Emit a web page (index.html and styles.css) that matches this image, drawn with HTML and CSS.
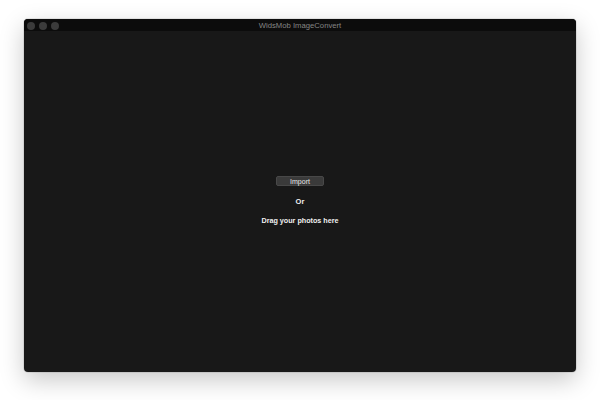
FILE: index.html
```html
<!DOCTYPE html>
<html>
<head>
<meta charset="utf-8">
<link rel="stylesheet" href="styles.css">
</head>
<body>
<div class="window">
  <div class="titlebar">
    <div class="lights">
      <span class="light"></span>
      <span class="light"></span>
      <span class="light"></span>
    </div>
    <div class="title">WidsMob ImageConvert</div>
  </div>
  <div class="content">
    <button class="import">Import</button>
    <div class="or">Or</div>
    <div class="drag">Drag your photos here</div>
  </div>
</div>
</body>
</html>
```
FILE: styles.css
```css
html, body {
  margin: 0;
  padding: 0;
  background: #ffffff;
  width: 600px;
  height: 400px;
  overflow: hidden;
  font-family: "Liberation Sans", Arial, sans-serif;
}
.window {
  margin: 19px 0 0 24px;
  width: 552px;
  height: 353px;
  background: #181818;
  border-radius: 4px;
  box-shadow: 0 8px 24px rgba(0,0,0,0.22), 0 0 0 1px rgba(0,0,0,0.08);
  display: flex;
  flex-direction: column;
  overflow: hidden;
}
.titlebar {
  height: 12px;
  background: #0c0c0c;
  display: flex;
  align-items: center;
  position: relative;
  flex-shrink: 0;
}
.lights {
  display: flex;
  gap: 4px;
  padding-left: 3px;
  margin-top: 1px;
}
.light {
  width: 8px;
  height: 8px;
  border-radius: 50%;
  background: #3b3b3b;
}
.title {
  position: absolute;
  left: 0;
  right: 0;
  top: 2px;
  text-align: center;
  font-size: 7.7px;
  color: #858585;
  line-height: 9px;
}
.content {
  flex: 1;
  display: flex;
  flex-direction: column;
  align-items: center;
  padding-top: 145px;
}
.import {
  width: 48px;
  height: 10px;
  padding: 1px 0 0;
  margin: 0;
  border: 1px solid #484848;
  border-radius: 2px;
  background: #3a3a3a;
  color: #e8e8e8;
  font-family: "Liberation Sans", Arial, sans-serif;
  font-size: 7px;
  line-height: 7px;
}
.or {
  margin-top: 11px;
  font-size: 7.5px;
  font-weight: bold;
  color: #f0f0f0;
  line-height: 9px;
}
.drag {
  margin-top: 10px;
  font-size: 7.2px;
  font-weight: bold;
  color: #f0f0f0;
  line-height: 9px;
}
```
